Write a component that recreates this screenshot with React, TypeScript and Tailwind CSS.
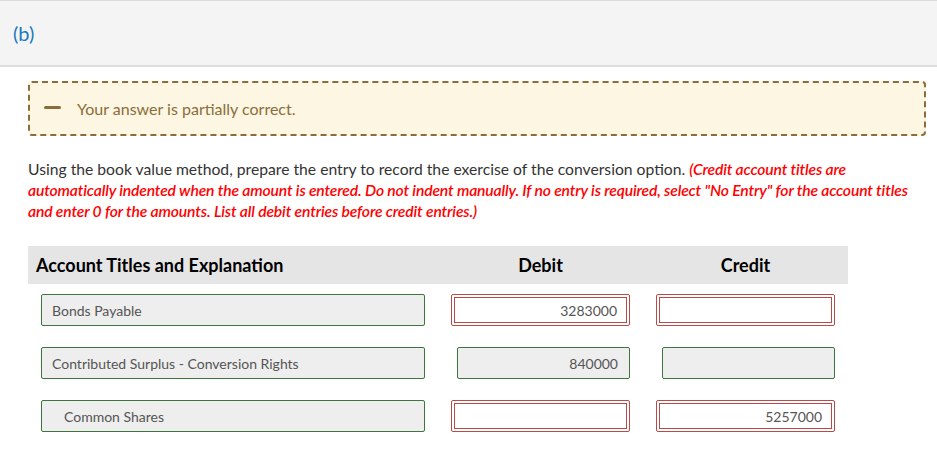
import React from 'react';

type Row = {
  account: string;
  indent?: boolean;
  debit: string;
  credit: string;
  debitOk: boolean;
  creditOk: boolean;
};

const rows: Row[] = [
  { account: 'Bonds Payable', debit: '3283000', credit: '', debitOk: false, creditOk: false },
  { account: 'Contributed Surplus - Conversion Rights', debit: '840000', credit: '', debitOk: true, creditOk: true },
  { account: 'Common Shares', indent: true, debit: '', credit: '5257000', debitOk: false, creditOk: false },
];

function AmountBox({ value, ok }: { value: string; ok: boolean }) {
  if (ok) {
    return (
      <div className="ml-[6px] h-[32px] rounded-[2px] border border-[#3c763d] bg-[#eeeeee] flex items-center justify-end pr-[11px] text-[14px] text-[#555]">
        {value}
      </div>
    );
  }
  return (
    <div className="h-[32px] rounded-[2px] border border-[#b94a48] bg-white p-[2px]">
      <div className="h-full border border-[#b94a48] flex items-center justify-end pr-[9px] text-[14px] text-[#555]">
        {value}
      </div>
    </div>
  );
}

export default function App() {
  return (
    <div className="w-[937px] h-[469px] bg-white overflow-hidden" style={{ fontFamily: 'Lato, "Open Sans", sans-serif' }}>
      <div className="h-[67px] bg-[#f4f4f4] border-t border-t-[#dddddd] border-b-2 border-b-[#dddddd] flex items-center pl-[13px]">
        <span className="text-[20px] text-[#1a7bbf]">(b)</span>
      </div>

      <div className="px-[28px]">
        <div className="mt-[14px] h-[55px] w-[898px] rounded-[4px] border-2 border-dashed border-[#8a6d3b] bg-[#fcf6e2] flex items-center pl-[14px]">
          <span className="w-[17px] h-[3px] rounded-full bg-[#8a6d3b] mb-[2px]" />
          <span className="ml-[16px] text-[16px] text-[#8a6d3b]">Your answer is partially correct.</span>
        </div>

        <p className="mt-[23px] w-[898px] text-[15.7px] leading-[21px] text-[#333]">
          Using the book value method, prepare the entry to record the exercise of the conversion option.{' '}
          <span className="italic font-semibold tracking-[-0.15px] text-[#ff0000]">
            (Credit account titles are automatically indented when the amount is entered. Do not indent manually. If no entry is required, select "No Entry" for the account titles and enter 0 for the amounts. List all debit entries before credit entries.)
          </span>
        </p>

        <div className="mt-[24px] w-[820px]">
          <div className="grid grid-cols-[410px_205px_205px] h-[38px] bg-[#e5e5e5] items-center text-[18px] font-bold text-black">
            <div className="pl-[8px]">Account Titles and Explanation</div>
            <div className="text-center">Debit</div>
            <div className="text-center">Credit</div>
          </div>

          <div className="mt-[10px] flex flex-col gap-[21px]">
            {rows.map((r) => (
              <div key={r.account} className="grid grid-cols-[410px_205px_205px]">
                <div className="px-[13px]">
                  <div
                    className={`h-[32px] rounded-[2px] border border-[#3c763d] bg-[#eeeeee] flex items-center text-[14px] text-[#555] ${
                      r.indent ? 'pl-[22px]' : 'pl-[10px]'
                    }`}
                  >
                    {r.account}
                  </div>
                </div>
                <div className="px-[13px]">
                  <AmountBox value={r.debit} ok={r.debitOk} />
                </div>
                <div className="px-[13px]">
                  <AmountBox value={r.credit} ok={r.creditOk} />
                </div>
              </div>
            ))}
          </div>
        </div>
      </div>
    </div>
  );
}
